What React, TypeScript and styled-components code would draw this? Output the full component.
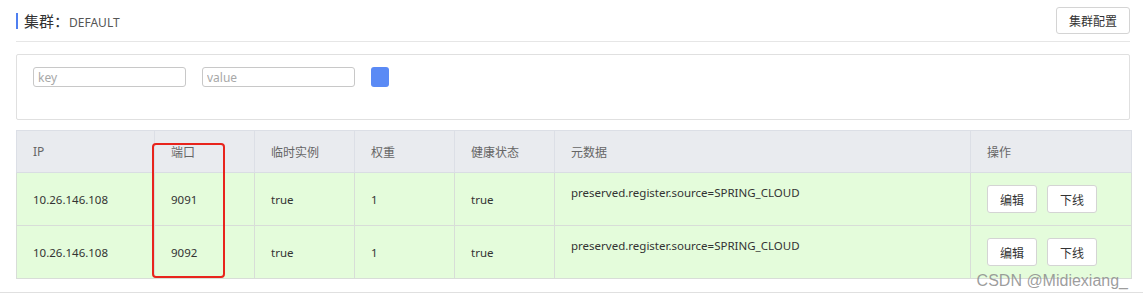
import React from "react";
import styled, { createGlobalStyle } from "styled-components";

const Global = createGlobalStyle`
  html, body { margin: 0; padding: 0; background: #fff; }
  body { font-family: "Noto Sans", "Noto Sans CJK SC", sans-serif; color: #333; }
`;

const Page = styled.div`
  position: relative;
  width: 1143px;
  height: 303px;
  overflow: hidden;
`;

const Content = styled.div`
  padding: 9px 13px 0 16px;
`;

const Header = styled.div`
  display: flex;
  align-items: center;
  justify-content: space-between;
  height: 32px;
  border-bottom: 1px solid #e6e6e6;
`;

const Title = styled.div`
  display: flex;
  align-items: baseline;
  border-left: 2px solid #4f7ff0;
  padding-left: 6px;
  height: 16px;
  line-height: 16px;
  margin-top: -8px;
`;

const TitleMain = styled.span`
  font-family: "Noto Sans CJK SC", sans-serif;
  font-size: 15px;
  color: #333;
`;

const TitleSub = styled.span`
  font-size: 12px;
  color: #555;
  margin-left: 0;
`;

const Button = styled.button<{ $w?: number }>`
  width: ${(p) => p.$w ?? 50}px;
  height: 28px;
  border: 1px solid #d4d4d4;
  border-radius: 3px;
  background: #fff;
  font-family: "Noto Sans CJK SC", sans-serif;
  font-size: 12px;
  color: #333;
  padding: 0;
  cursor: pointer;
`;

const TopButton = styled(Button)`
  height: 27px;
  margin-top: -10px;
`;

const FilterBox = styled.div`
  margin-top: 12px;
  border: 1px solid #e0e0e0;
  border-radius: 2px;
  padding: 12px 16px 0;
  box-sizing: border-box;
  height: 66px;
  display: flex;
  align-items: flex-start;
  gap: 16px;
`;

const Input = styled.input`
  width: 153px;
  height: 20px;
  box-sizing: border-box;
  border: 1px solid #c8c8c8;
  border-radius: 3px;
  padding: 0 4px;
  font-family: "Noto Sans", sans-serif;
  font-size: 12px;
  color: #333;
  outline: none;
  &::placeholder { color: #a8a8a8; }
`;

const SearchBtn = styled.div`
  width: 18px;
  height: 20px;
  border-radius: 3px;
  background: #5a8af5;
`;

const Table = styled.table`
  margin-top: 10px;
  width: 1115px;
  border-collapse: collapse;
  table-layout: fixed;
`;

const Th = styled.th`
  height: 41px;
  background: #e9ebef;
  border: 1px solid #dcdfe6;
  border-bottom-color: #d9dde3;
  text-align: left;
  font-weight: normal;
  font-family: "Noto Sans", "Noto Sans CJK SC", sans-serif;
  font-size: 12px;
  color: #666;
  padding: 0 0 0 16px;
  vertical-align: middle;
`;

const Td = styled.td<{ $top?: boolean }>`
  height: 53px;
  background: #e4fcdb;
  border: 1px solid #d8ddd8;
  padding: ${(p) => (p.$top ? "12px 0 0 16px" : "0 0 0 16px")};
  font-family: "Noto Sans", sans-serif;
  font-size: 11.5px;
  color: #333;
  vertical-align: ${(p) => (p.$top ? "top" : "middle")};
  box-sizing: border-box;
`;

const Ops = styled.div`
  display: flex;
  gap: 10px;
`;

const BottomLine = styled.div`
  margin-top: 13px;
  border-top: 1px solid #e0e0e0;
`;

const Highlight = styled.div`
  position: absolute;
  left: 152px;
  top: 143px;
  width: 69px;
  height: 131px;
  border: 2.5px solid #e8241c;
  border-radius: 4px;
`;

const Watermark = styled.div`
  position: absolute;
  right: 15px;
  top: 272px;
  font-family: "Liberation Sans", Arial, sans-serif;
  font-size: 16px;
  color: rgba(140, 140, 140, 0.85);
`;

const cols = [138, 100, 100, 100, 100, 416, 161];
const heads = ["IP", "端口", "临时实例", "权重", "健康状态", "元数据", "操作"];
const rows = [
  { ip: "10.26.146.108", port: "9091" },
  { ip: "10.26.146.108", port: "9092" },
];

export default function App() {
  return (
    <Page>
      <Global />
      <Content>
        <Header>
          <Title>
            <TitleMain>集群：</TitleMain>
            <TitleSub>DEFAULT</TitleSub>
          </Title>
          <TopButton $w={74}>集群配置</TopButton>
        </Header>
        <FilterBox>
          <Input placeholder="key" />
          <Input placeholder="value" />
          <SearchBtn />
        </FilterBox>
        <Table>
          <colgroup>
            {cols.map((w, i) => (
              <col key={i} style={{ width: w }} />
            ))}
          </colgroup>
          <thead>
            <tr>
              {heads.map((h) => (
                <Th key={h}>{h}</Th>
              ))}
            </tr>
          </thead>
          <tbody>
            {rows.map((r) => (
              <tr key={r.port}>
                <Td>{r.ip}</Td>
                <Td>{r.port}</Td>
                <Td>true</Td>
                <Td>1</Td>
                <Td>true</Td>
                <Td $top>preserved.register.source=SPRING_CLOUD</Td>
                <Td>
                  <Ops>
                    <Button>编辑</Button>
                    <Button>下线</Button>
                  </Ops>
                </Td>
              </tr>
            ))}
          </tbody>
        </Table>
      </Content>
      <BottomLine />
      <Highlight />
      <Watermark>CSDN @Midiexiang_</Watermark>
    </Page>
  );
}
